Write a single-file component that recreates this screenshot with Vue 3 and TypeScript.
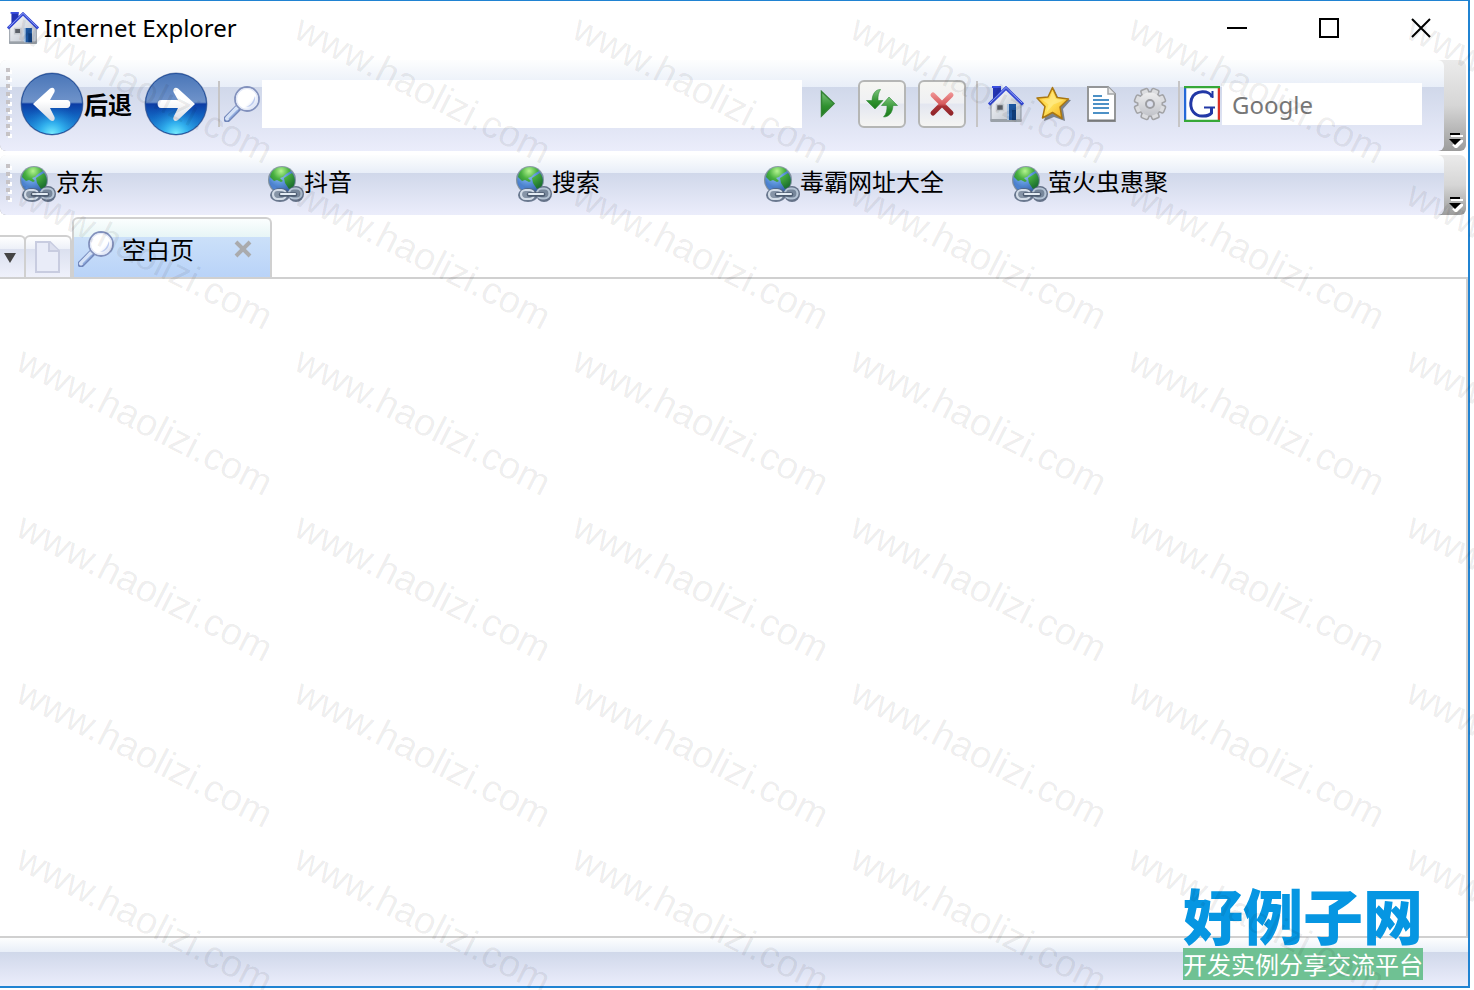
<script setup lang="ts">
import { ref } from 'vue'

interface Bookmark {
  label: string
  href: string
}

const bookmarks: Bookmark[] = [
  { label: '京东', href: '#jd' },
  { label: '抖音', href: '#douyin' },
  { label: '搜索', href: '#search' },
  { label: '毒霸网址大全', href: '#duba' },
  { label: '萤火虫惠聚', href: '#yinghuochong' },
]

const address = ref('')
const query = ref('')

const marks = Array.from({ length: 36 }, (_, i) => ({
  x: 14 + (i % 6) * 278,
  y: 37 + Math.floor(i / 6) * 166,
}))

const teeth = [0, 45, 90, 135, 180, 225, 270, 315]
</script>

<template>
  <div class="screen">
    <svg class="defs" width="0" height="0" aria-hidden="true">
      <defs>
        <linearGradient id="orbTop" x1="0" y1="0" x2="0" y2="1">
          <stop offset="0" stop-color="#4a76b8" />
          <stop offset=".47" stop-color="#6f93ca" />
          <stop offset=".5" stop-color="#0c3ca4" />
          <stop offset=".72" stop-color="#1268c4" />
          <stop offset="1" stop-color="#2a9ce0" />
        </linearGradient>
        <radialGradient id="orbGlow" cx=".5" cy="1" r=".5">
          <stop offset="0" stop-color="#7cf0ff" />
          <stop offset=".4" stop-color="#35baf4" stop-opacity=".8" />
          <stop offset="1" stop-color="#1574cc" stop-opacity="0" />
        </radialGradient>
        <linearGradient id="arrowFill" x1="0" y1="0" x2="0" y2="1">
          <stop offset=".4" stop-color="#fff" />
          <stop offset="1" stop-color="#d8dce4" />
        </linearGradient>
        <linearGradient id="wall" x1="0" y1="0" x2="1" y2="1">
          <stop offset="0" stop-color="#fff" />
          <stop offset="1" stop-color="#b4bcc8" />
        </linearGradient>
        <linearGradient id="glass" x1="0" y1="0" x2="1" y2="1">
          <stop offset="0" stop-color="#fff" />
          <stop offset=".6" stop-color="#fff" />
          <stop offset="1" stop-color="#bccbee" />
        </linearGradient>
        <linearGradient id="greenFill" x1="0" y1="0" x2="0" y2="1">
          <stop offset="0" stop-color="#7cc47c" />
          <stop offset=".6" stop-color="#2f912f" />
          <stop offset="1" stop-color="#1c7a1c" />
        </linearGradient>
        <linearGradient id="redFill" gradientUnits="userSpaceOnUse" x1="0" y1="12" x2="0" y2="36">
          <stop offset="0" stop-color="#f29a9a" />
          <stop offset=".5" stop-color="#d65a5c" />
          <stop offset=".6" stop-color="#a83236" />
          <stop offset="1" stop-color="#8c2226" />
        </linearGradient>
        <linearGradient id="starFill" x1="0" y1="0" x2="1" y2="1">
          <stop offset="0" stop-color="#ffb81c" />
          <stop offset=".5" stop-color="#ffe35a" />
          <stop offset="1" stop-color="#f2a314" />
        </linearGradient>
        <linearGradient id="gearFill" x1="0" y1="0" x2="0" y2="1">
          <stop offset="0" stop-color="#eeeeef" />
          <stop offset="1" stop-color="#c2c4ca" />
        </linearGradient>
        <radialGradient id="sea" cx=".4" cy=".3" r=".7">
          <stop offset="0" stop-color="#9cc8f0" />
          <stop offset=".5" stop-color="#5a92da" />
          <stop offset="1" stop-color="#3560a8" />
        </radialGradient>
        <radialGradient id="land" gradientUnits="userSpaceOnUse" cx="13" cy="5" r="18">
          <stop offset="0" stop-color="#b4f490" />
          <stop offset=".45" stop-color="#48b040" />
          <stop offset="1" stop-color="#1f7430" />
        </radialGradient>
        <symbol id="house" viewBox="0 0 36 36">
          <path d="M5 0h8v8l-8 8z" fill="#2434b4" />
          <path d="M4 0h9v2H4z" fill="#3c50e0" />
          <path d="M18 3L3 18v17h30V18z" fill="url(#wall)" stroke="#8b939d" stroke-width="1" />
          <path d="M2.500 33h31v3h-31z" fill="#9aa1a8" />
          <path d="M1 18.500L18 2l17 16.500" fill="none" stroke="#3448d4" stroke-width="3.200" />
          <path d="M2 17L18 1.500 34 17" fill="none" stroke="#93a2f4" stroke-width="1" />
          <path d="M8.500 18.500h7v6h-7z" fill="#5c6168" stroke="#c6cacf" stroke-width="1.500" />
          <path d="M19 18h9v16h-9z" fill="#a9c4e2" />
          <path d="M21 18h7v16h-7z" fill="#1c559e" />
          <path d="M24 24h4v10h-4z" fill="#0e3b78" />
        </symbol>
        <symbol id="lens" viewBox="0 0 36 36">
          <path d="M3 33L14 22" stroke="#7186ba" stroke-width="7" stroke-linecap="round" />
          <path d="M3 32.500L13 22" stroke="#d5e2f7" stroke-width="4" stroke-linecap="round" />
          <path d="M5 33L14 24" stroke="#91addf" stroke-width="1.500" />
          <circle cx="23" cy="13" r="12" fill="url(#glass)" stroke="#8291bd" stroke-width="1.800" />
          <circle cx="23" cy="13" r="10.500" fill="none" stroke="#e2e8f7" stroke-width="1.200" />
          <path d="M31 10c1 6-3 11-9 11 5-2 7-5 9-11z" fill="#bfcdf0" />
        </symbol>
        <symbol id="globe" viewBox="0 0 36 36">
          <circle cx="14" cy="14" r="14" fill="#49606a" opacity=".6" />
          <circle cx="14" cy="14" r="12.800" fill="url(#sea)" />
          <path d="M2 11C3 4 9 1 14 1c4 0 7 1 9 4l-5 3-3 3-3 1 3 3-2 1-4-2-3 1-4-4z" fill="url(#land)" />
          <path d="M16 12l8-5c3 4 4 9 1 14l-4 2-4-6z" fill="url(#land)" />
          <path d="M2 15l6 6 5 6C7 26 2 21 2 15z" fill="#4c82d0" />
          <ellipse cx="12" cy="29" rx="10" ry="7" fill="#55657c" opacity=".85" />
          <ellipse cx="28" cy="28" rx="8" ry="8" fill="#4d5d74" opacity=".85" />
          <rect x="5" y="24" width="13" height="9" rx="4.500" fill="#8694a6" stroke="#d3dce7" stroke-width="2.200" />
          <rect x="21" y="22.500" width="12.500" height="10" rx="5" fill="#76869a" stroke="#b4c3d4" stroke-width="2.200" />
          <path d="M13 28.500h14" stroke="#4c5b70" stroke-width="4.500" stroke-linecap="round" />
          <path d="M13 28h14" stroke="#e4ecf4" stroke-width="2.200" stroke-linecap="round" />
        </symbol>
        <symbol id="orb" viewBox="0 0 64 64">
          <circle cx="32" cy="32" r="31.500" fill="#8093b5" />
          <circle cx="32" cy="32" r="30.500" fill="url(#orbTop)" />
          <circle cx="32" cy="32" r="30.500" fill="url(#orbGlow)" stroke="#24509c" stroke-width="1" />
          <path d="M13 32L30 16.500c3-2 5.500 .5 4.500 3.500l-4.500 8h17c4.500 0 4.500 8 0 8H30l4.500 9c1 3-1.500 5.500-4.500 3z" fill="url(#arrowFill)" />
        </symbol>
      </defs>
    </svg>

    <main class="window">
      <header class="titlebar">
        <svg class="app-icon" aria-hidden="true"><use href="#house" /></svg>
        <h1>Internet Explorer</h1>
        <div class="controls">
          <button type="button" aria-label="Minimize">
            <svg width="20" height="20" viewBox="0 0 20 20"><path d="M0 10h20" stroke="#000" stroke-width="2" /></svg>
          </button>
          <button type="button" aria-label="Maximize">
            <svg width="20" height="20" viewBox="0 0 20 20"><path d="M1 1h18v18H1z" fill="none" stroke="#000" stroke-width="2" /></svg>
          </button>
          <button type="button" aria-label="Close">
            <svg width="20" height="20" viewBox="0 0 20 20"><path d="M1 1l18 18M19 1L1 19" stroke="#000" stroke-width="2" /></svg>
          </button>
        </div>
      </header>

      <div class="band nav-band">
        <nav class="bar nav-bar" aria-label="Navigation">
          <svg class="grip" width="8" height="72" aria-hidden="true">
            <g v-for="n in 9" :key="n">
              <rect x="2" :y="n * 8 - 6" width="4" height="4" fill="#fff" />
              <rect x="0" :y="n * 8 - 8" width="4" height="4" fill="#c6c3c6" />
            </g>
          </svg>
          <button type="button" class="back">
            <svg class="orb" aria-hidden="true"><use href="#orb" /></svg>
            <span>后退</span>
          </button>
          <button type="button" class="forward" aria-label="前进">
            <svg class="orb flip" aria-hidden="true"><use href="#orb" /></svg>
          </button>
          <i class="sep"></i>
          <svg class="icon lens" aria-hidden="true"><use href="#lens" /></svg>
          <input v-model="address" class="address" type="text" aria-label="Address">
          <button type="button" class="go" aria-label="Go">
            <svg width="16" height="28" viewBox="0 0 16 28">
              <path d="M1.500 1.500L14 13.500 1.500 26z" fill="url(#greenFill)" stroke="#338333" stroke-width="1.500" />
            </svg>
          </button>
          <button type="button" class="framed" aria-label="Refresh">
            <svg width="48" height="48" viewBox="0 0 48 48" fill="url(#greenFill)" stroke="#2d8a35" stroke-width=".6">
              <path d="M22.500 9.500c-5 0-8 4-8.500 11H8.500L17 29l8-8.500h-5c-.2-5 .5-8 2.500-11z" />
              <path d="M25.500 37c5.500 0 9-4 9.500-11.500h4.500L31 17l-7.500 8.500H29c.2 5-.8 8.500-3.500 11.500z" />
            </svg>
          </button>
          <button type="button" class="framed" aria-label="Stop">
            <svg width="48" height="48" viewBox="0 0 48 48">
              <path d="M15 15l18 18M33 15L15 33" stroke="url(#redFill)" stroke-width="5" stroke-linecap="round" />
            </svg>
          </button>
          <i class="sep"></i>
          <button type="button" class="tool" aria-label="Home">
            <svg class="icon"><use href="#house" /></svg>
          </button>
          <button type="button" class="tool" aria-label="Favorites">
            <svg class="icon" viewBox="0 0 36 36">
              <path d="M18 3l5 10 12 1-8 9 2 12-11-4-10 4 3-12-6-8 9-2z" fill="#5b636c" opacity=".75" />
              <path d="M16.500 1.500l4.500 10 11.500 1.500-8.500 8 2 11.500-9.500-6-10 5.500 2.500-11.500L1 12l11-1z" fill="url(#starFill)" stroke="#a97712" stroke-width="1.500" stroke-linejoin="round" />
              <path d="M16.500 5l3 8 8 1.500-10 4-7 8 2-8-7-5 8-.5z" fill="#fff0a0" opacity=".5" />
            </svg>
          </button>
          <button type="button" class="tool" aria-label="History">
            <svg class="icon" viewBox="0 0 36 36">
              <path d="M4 1h20l7 7v27H4z" fill="#fff" stroke="#949698" stroke-width="2" />
              <path d="M4 34.500h27" stroke="#77797b" stroke-width="2" />
              <path d="M24 1v7h7" fill="#e7e7e7" stroke="#a4a6a8" stroke-width="1.500" />
              <path d="M9 10h9M9 14h16M9 18h16M9 22h16M9 27h16" stroke="#4d91c6" stroke-width="2.200" />
            </svg>
          </button>
          <button type="button" class="tool gear" aria-label="Settings">
            <svg class="icon" viewBox="0 0 36 36">
              <g fill="#a2a3a6">
                <rect v-for="a in teeth" :key="a" x="13.500" y="1.500" width="9" height="9" rx="2.500" :transform="`rotate(${a + 22} 18 18)`" />
              </g>
              <circle cx="18" cy="18" r="13" fill="#a2a3a6" />
              <g fill="#dcdde0">
                <rect v-for="a in teeth" :key="a" x="15" y="3" width="6" height="9" rx="1" :transform="`rotate(${a + 22} 18 18)`" />
              </g>
              <circle cx="18" cy="18" r="11.500" fill="url(#gearFill)" />
              <circle cx="18" cy="18" r="4" fill="#dce0ee" stroke="#9d9ea2" stroke-width="2" />
            </svg>
          </button>
          <i class="sep"></i>
          <svg class="icon g-icon" viewBox="0 0 36 36" aria-hidden="true">
            <path d="M0 0h36v36H0z" fill="#fff" />
            <path d="M1 0v36" stroke="#2468d8" stroke-width="2.500" />
            <path d="M35 0v36" stroke="#dc3028" stroke-width="2.500" />
            <path d="M0 1h36M0 35h36" stroke="#36a838" stroke-width="2.500" />
            <path d="M28 11C26 4 11 3.500 7.500 13c-3 11 4 17.500 11.500 17 4 0 7-1 8.500-3v-6" fill="none" stroke="#2238a6" stroke-width="3" />
            <path d="M20 21.500h11M28.500 5v7" stroke="#2238a6" stroke-width="2" />
          </svg>
          <input v-model="query" class="query" type="search" placeholder="Google" aria-label="Google">
        </nav>
        <button type="button" class="more" aria-label="More buttons">
          <svg width="16" height="16" viewBox="0 0 16 16">
            <path d="M4 3h12v2H4zM5 13l9-5h2v2l-6 6H8z" fill="#fff" />
            <path d="M3 1h10v2H3zM2 7h12l-6 6z" fill="#000" />
          </svg>
        </button>
      </div>

      <div class="band links-band">
        <nav class="bar links-bar" aria-label="Links">
          <svg class="grip" width="8" height="40" aria-hidden="true">
            <g v-for="n in 5" :key="n">
              <rect x="2" :y="n * 8 - 6" width="4" height="4" fill="#fff" />
              <rect x="0" :y="n * 8 - 8" width="4" height="4" fill="#c6c3c6" />
            </g>
          </svg>
          <a v-for="b in bookmarks" :key="b.href" :href="b.href" class="link">
            <svg class="icon" aria-hidden="true"><use href="#globe" /></svg>
            <span>{{ b.label }}</span>
          </a>
        </nav>
        <button type="button" class="more" aria-label="More links">
          <svg width="16" height="16" viewBox="0 0 16 16">
            <path d="M4 3h12v2H4zM5 13l9-5h2v2l-6 6H8z" fill="#fff" />
            <path d="M3 1h10v2H3zM2 7h12l-6 6z" fill="#000" />
          </svg>
        </button>
      </div>

      <div class="tabs">
        <button type="button" class="stub list" aria-label="Tab list">
          <svg width="12" height="10" viewBox="0 0 12 10"><path d="M0 0h12L6 10z" fill="#444" /></svg>
        </button>
        <button type="button" class="stub new" aria-label="New tab">
          <svg width="26" height="32" viewBox="0 0 26 32">
            <path d="M1 1h14l9 9v21H1z" fill="#e9ecf8" stroke="#c8cce0" stroke-width="2" />
            <path d="M14 1v9h10" fill="#dcdfee" stroke="#c8cce0" stroke-width="2" />
          </svg>
        </button>
        <div class="tab">
          <svg class="icon" aria-hidden="true"><use href="#lens" /></svg>
          <span>空白页</span>
          <button type="button" aria-label="Close tab">
            <svg width="18" height="18" viewBox="0 0 18 18"><path d="M2 2l14 14M16 2L2 16" stroke="#aaabad" stroke-width="4" /></svg>
          </button>
        </div>
      </div>

      <section class="page" aria-label="空白页"></section>
      <footer class="status"></footer>
    </main>

    <aside class="brand">
      <strong>好例子网</strong>
      <span>开发实例分享交流平台</span>
    </aside>

    <svg class="marks" aria-hidden="true">
      <text v-for="(m, i) in marks" :key="i" :transform="`translate(${m.x} ${m.y}) rotate(27)`">www.haolizi.com</text>
    </svg>
  </div>
</template>

<style>
body {
  margin: 0;
  background: #fff;
}
</style>

<style scoped>
.screen {
  position: relative;
  box-sizing: border-box;
  height: 100vh;
  padding: 0 4px 2px 0;
  overflow: hidden;
  font-family: "Noto Sans", "Noto Sans CJK SC", sans-serif;
  font-size: 24px;
  line-height: 32px;
  color: #000;
}
.defs {
  position: absolute;
}
.window {
  box-sizing: border-box;
  display: flex;
  flex-direction: column;
  height: 100%;
  border: 2px solid #2083d2;
  border-top-width: 1px;
  border-left: 0;
}
button {
  display: flex;
  align-items: center;
  justify-content: center;
  flex: none;
  margin: 0;
  padding: 0;
  border: 0;
  background: none;
  color: inherit;
  font: inherit;
}
svg {
  display: block;
  flex: none;
}
.icon {
  width: 36px;
  height: 36px;
}
.titlebar {
  display: flex;
  align-items: center;
  flex: none;
  height: 54px;
  margin-bottom: 5px;
  padding: 0 1px 0 7px;
}
.app-icon {
  width: 32px;
  height: 32px;
  margin-right: 5px;
}
h1 {
  margin: 0;
  font-size: 24px;
  font-weight: 400;
}
.controls {
  display: flex;
  margin-left: auto;
}
.controls button {
  width: 92px;
  height: 54px;
}
.band {
  display: flex;
  flex: none;
  margin-right: 2px;
  border-radius: 6px;
  background: linear-gradient(#ebebeb, #d6d6d6 50%, #9c9c9c);
}
.nav-band {
  height: 91px;
  margin-bottom: 4px;
}
.links-band {
  height: 60px;
}
.bar {
  box-sizing: border-box;
  display: flex;
  align-items: center;
  flex: 1;
  min-width: 0;
  border-radius: 6px;
}
.bar,
.status {
  background: linear-gradient(#fdfefe, #e8eef8 30%, #d0d8ea 30%, #ebedfb);
}
.nav-bar {
  padding: 0 22px 3px 6px;
}
.links-bar {
  padding: 0 0 2px 6px;
}
.grip {
  margin-right: 6px;
}
.more {
  align-items: flex-end;
  width: 22px;
  padding-bottom: 3px;
}
.orb {
  width: 64px;
  height: 64px;
}
.flip {
  transform: scaleX(-1);
}
.back {
  margin-right: 12px;
  font-weight: 700;
}
.back span {
  padding-top: 2px;
}
.sep {
  flex: none;
  width: 2px;
  height: 46px;
  background: #c6c5c6;
}
.forward + .sep {
  margin: 0 4px 0 10px;
}
.framed + .sep {
  margin: 0 10px;
}
.gear + .sep {
  margin: 0 4px 0 10px;
}
.lens {
  margin-right: 2px;
}
input {
  box-sizing: border-box;
  border: 0;
  border-radius: 0;
  outline: 0;
  background: #fff;
  color: #000;
  font: inherit;
}
.address {
  flex: 1;
  min-width: 0;
  height: 48px;
  padding: 0 8px;
}
.go {
  width: 56px;
  padding-right: 4px;
}
.framed {
  box-sizing: border-box;
  width: 48px;
  height: 48px;
  border: 2px solid #b5b6b5;
  border-radius: 6px;
  background: linear-gradient(#f6f6f2, #eff0f3 48%, #e3e6f0 50%, #f5f5f3);
}
.framed + .framed {
  margin-left: 12px;
}
.tool + .tool {
  margin-left: 12px;
}
.g-icon {
  margin-right: 2px;
}
.query {
  appearance: none;
  width: 200px;
  height: 42px;
  padding: 0 10px;
}
.query::placeholder {
  color: #777;
  opacity: 1;
}
.link {
  display: flex;
  align-items: center;
  flex: none;
  width: 248px;
  color: #000;
  text-decoration: none;
}
.link span {
  padding-bottom: 4px;
}
.tabs {
  display: flex;
  align-items: flex-end;
  flex: none;
  height: 62px;
  border-bottom: 2px solid #d0d0d0;
}
.stub,
.tab {
  box-sizing: border-box;
  border: 2px solid #d0d0d0;
  border-bottom: 0;
  border-radius: 6px 6px 0 0;
}
.stub {
  height: 42px;
  background: linear-gradient(#fff, #edf0f8 30%, #dbe0ef 30%, #eff1fb);
}
.list {
  width: 26px;
  border-left: 0;
  border-top-left-radius: 0;
  padding: 2px 4px 0 0;
}
.new {
  width: 48px;
  margin-left: -2px;
}
.tab {
  display: flex;
  align-items: center;
  width: 200px;
  height: 60px;
  padding: 2px 18px 0 4px;
  background: linear-gradient(#fbfefe, #e7f5f6 31%, #cbe0f9 31%, #b9d3f8);
}
.tab span {
  flex: 1;
  padding: 2px 0 0 8px;
}
.page {
  flex: 1;
  min-height: 0;
  border-right: 2px solid #d0d0d0;
  border-bottom: 2px solid #d0d0d0;
}
.status {
  flex: none;
  height: 48px;
}
.brand {
  position: absolute;
  right: 51px;
  bottom: 10px;
  display: flex;
  flex-direction: column;
  font-family: "Noto Sans CJK SC", sans-serif;
  white-space: nowrap;
}
.brand strong {
  padding-bottom: 2px;
  color: #0696e2;
  font-size: 60px;
  font-weight: 900;
  line-height: 64px;
}
.brand span {
  background: #6fc193;
  color: #fff;
  font-size: 24px;
  line-height: 32px;
}
.marks {
  position: absolute;
  inset: 0;
  width: 100%;
  height: 100%;
  pointer-events: none;
  fill: #000;
  fill-opacity: 0.075;
  font-family: "Liberation Sans", Arial, sans-serif;
  font-size: 38px;
}
</style>
